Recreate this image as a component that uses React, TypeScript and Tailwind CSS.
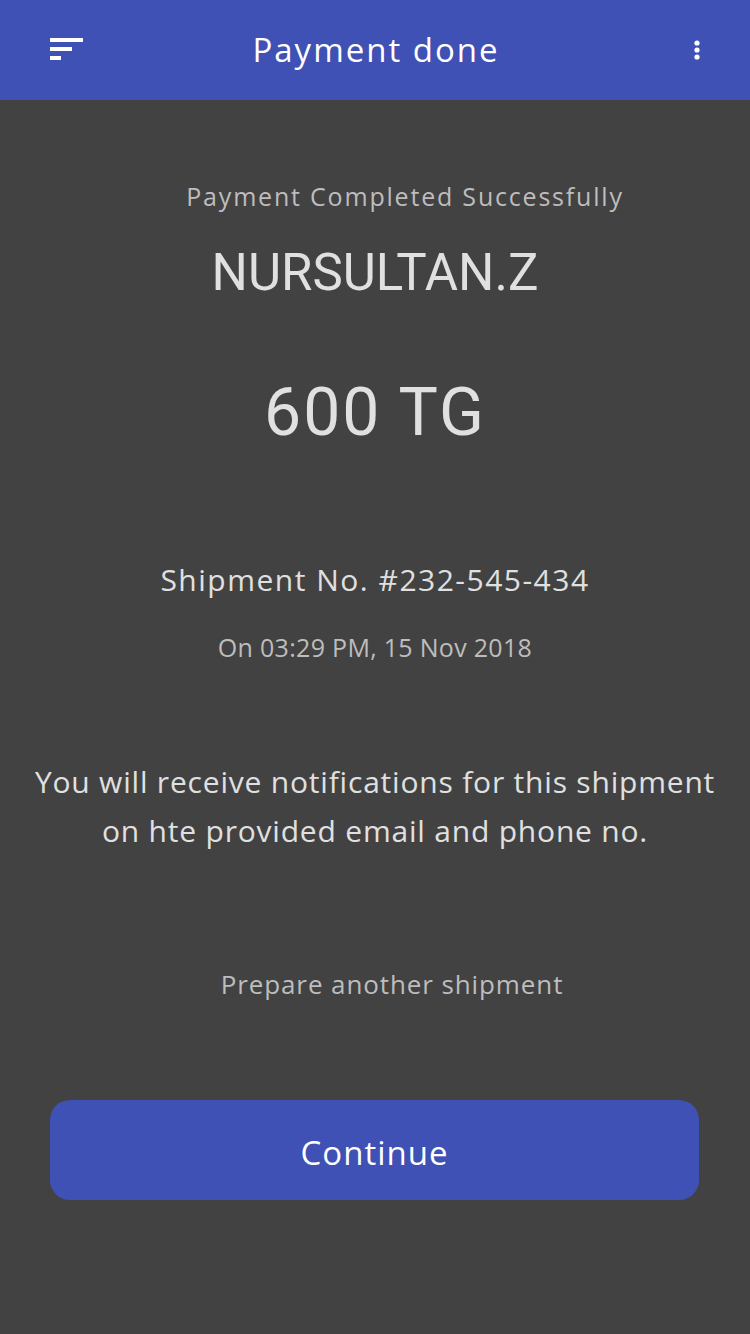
import React from "react";

const sans = { fontFamily: '"Open Sans", "Liberation Sans", sans-serif' };
const robo = { fontFamily: 'Roboto, "Liberation Sans", sans-serif' };

export default function App() {
  return (
    <div className="w-[750px] h-[1334px] bg-[#424242] flex flex-col" style={sans}>
      <header className="h-[100px] bg-[#3f51b5] flex items-center pl-[50px] pr-[48px] shrink-0">
        <div className="w-[60px] flex items-center">
          <svg width="34" height="24" viewBox="0 0 34 24" className="block">
            <rect x="0" y="0" width="33" height="4" fill="#fff" />
            <rect x="0" y="9" width="22" height="4" fill="#fff" />
            <rect x="0" y="18" width="11" height="4" fill="#fff" />
          </svg>
        </div>
        <h1 className="flex-1 text-center text-white text-[33px] leading-[40px] tracking-[2px]">Payment done</h1>
        <div className="w-[60px] flex items-center justify-end">
          <svg width="10" height="20" viewBox="0 0 10 20" className="block">
            <circle cx="5" cy="3" r="2.6" fill="#fff" />
            <circle cx="5" cy="10" r="2.6" fill="#fff" />
            <circle cx="5" cy="17" r="2.6" fill="#fff" />
          </svg>
        </div>
      </header>
      <main className="flex flex-col items-center">
        <p className="mt-[78px] pl-[60px] text-[25px] leading-[36px] tracking-[1.8px] text-[#bdbdbd]">Payment Completed Successfully</p>
        <p className="mt-[29px] text-[51px] leading-[60px] text-[#e0e0e0]" style={robo}>NURSULTAN.Z</p>
        <p className="mt-[72px] text-[66px] leading-[76px] tracking-[2px] text-[#e0e0e0]" style={robo}>600 TG</p>
        <p className="mt-[109px] text-[30px] leading-[40px] tracking-[1.5px] text-[#e0e0e0]">Shipment No. #232-545-434</p>
        <p className="mt-[31px] text-[25px] leading-[32px] tracking-[0.3px] text-[#bdbdbd]">On 03:29 PM, 15 Nov 2018</p>
        <p className="mt-[94px] text-[30px] leading-[49px] tracking-[0.8px] text-[#e0e0e0] text-center">
          You will receive notifications for this shipment
          <br />
          on hte provided email and phone no.
        </p>
        <p className="mt-[112px] pl-[34px] text-[26px] leading-[34px] tracking-[0.9px] text-[#bdbdbd]">Prepare another shipment</p>
        <button className="mt-[99px] ml-[-1px] w-[649px] h-[100px] pt-[6px] rounded-[20px] bg-[#3f51b5] text-white text-[33px] tracking-[1px]">
          Continue
        </button>
      </main>
    </div>
  );
}
